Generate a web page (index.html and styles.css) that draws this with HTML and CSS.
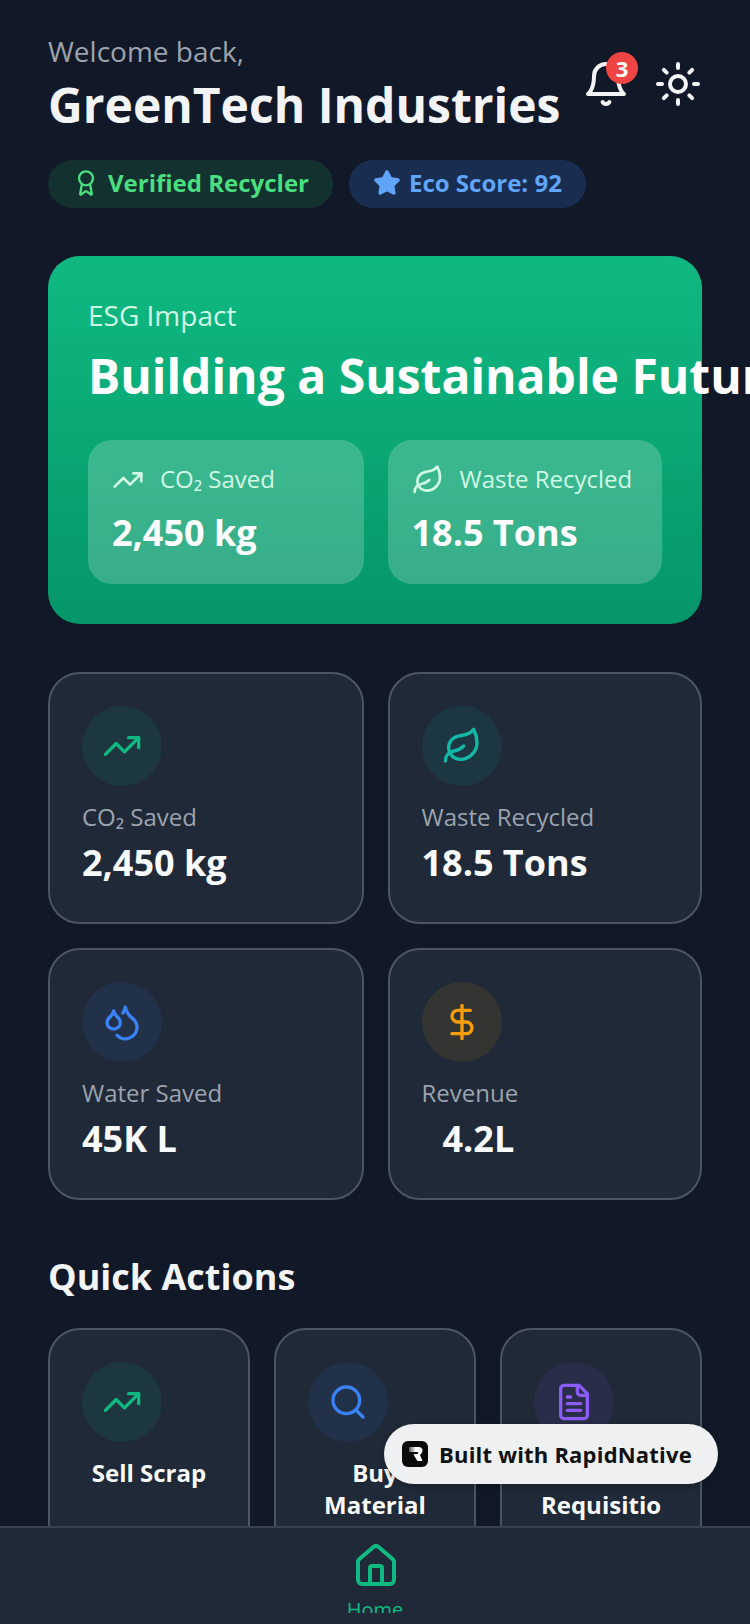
FILE: index.html
```html
<!DOCTYPE html>
<html lang="en">
<head>
    <meta charset="UTF-8">
    <meta name="viewport" content="width=device-width, initial-scale=1.0">
    <title>GreenTech Industries</title>
    <link rel="stylesheet" href="styles.css">
</head>
<body>
    <svg class="icon-defs" xmlns="http://www.w3.org/2000/svg">
        <symbol id="i-trend" viewBox="0 0 24 24"><polyline points="22 7 13.5 15.5 8.5 10.5 2 17"/><polyline points="16 7 22 7 22 13"/></symbol>
        <symbol id="i-leaf" viewBox="0 0 24 24"><path d="M11 20A7 7 0 0 1 9.8 6.1C15.5 5 17 4.48 19 2c1 2 2 4.18 2 8 0 5.5-4.78 10-10 10Z"/><path d="M2 21c0-3 1.85-5.36 5.08-6C9.5 14.52 12 13 13 12"/></symbol>
        <symbol id="i-drops" viewBox="0 0 24 24"><path d="M7 16.3c2.2 0 4-1.83 4-4.05 0-1.16-.57-2.26-1.71-3.19S7.29 6.75 7 5.3c-.29 1.45-1.14 2.84-2.29 3.76S3 11.1 3 12.25c0 2.22 1.8 4.05 4 4.05z"/><path d="M12.56 6.6A10.97 10.97 0 0 0 14 3.02c.5 2.5 2 4.9 4 6.5s3 3.5 3 5.5a6.98 6.98 0 0 1-11.91 4.97"/></symbol>
        <symbol id="i-dollar" viewBox="0 0 24 24"><path d="M12 2v20"/><path d="M17 5H9.5a3.5 3.5 0 0 0 0 7h5a3.5 3.5 0 0 1 0 7H6"/></symbol>
        <symbol id="i-search" viewBox="0 0 24 24"><circle cx="11" cy="11" r="8"/><path d="m21 21-4.3-4.3"/></symbol>
        <symbol id="i-file" viewBox="0 0 24 24"><path d="M15 2H6a2 2 0 0 0-2 2v16a2 2 0 0 0 2 2h12a2 2 0 0 0 2-2V7Z"/><path d="M14 2v4a2 2 0 0 0 2 2h4"/><path d="M10 9H8"/><path d="M16 13H8"/><path d="M16 17H8"/></symbol>
    </svg>

    <main class="content">
        <header class="header">
            <div>
                <div class="welcome">Welcome back,</div>
                <h1 class="company">GreenTech Industries</h1>
            </div>
            <div class="header-icons">
                <div class="bell">
                    <svg class="icon icon-48" viewBox="0 0 24 24"><path d="M6 8a6 6 0 0 1 12 0c0 7 3 9 3 9H3s3-2 3-9"/><path d="M10.3 21a1.94 1.94 0 0 0 3.4 0"/></svg>
                    <span class="bell-count">3</span>
                </div>
                <svg class="icon icon-48" viewBox="0 0 24 24"><circle cx="12" cy="12" r="4"/><path d="M12 2v2"/><path d="M12 20v2"/><path d="m4.93 4.93 1.41 1.41"/><path d="m17.66 17.66 1.41 1.41"/><path d="M2 12h2"/><path d="M20 12h2"/><path d="m6.34 17.66-1.41 1.41"/><path d="m19.07 4.93-1.41 1.41"/></svg>
            </div>
        </header>

        <div class="badges">
            <div class="badge badge-green">
                <svg class="icon icon-28" viewBox="0 0 24 24"><path d="m15.477 12.89 1.515 8.526a.5.5 0 0 1-.81.47l-3.58-2.687a1 1 0 0 0-1.197 0l-3.586 2.686a.5.5 0 0 1-.81-.469l1.514-8.526"/><circle cx="12" cy="8" r="6"/></svg>
                <span class="lifted">Verified Recycler</span>
            </div>
            <div class="badge badge-blue">
                <svg class="icon icon-28 icon-filled" viewBox="0 0 24 24"><path d="M11.525 2.295a.53.53 0 0 1 .95 0l2.31 4.679a2.123 2.123 0 0 0 1.595 1.16l5.166.756a.53.53 0 0 1 .294.904l-3.736 3.638a2.123 2.123 0 0 0-.611 1.878l.882 5.14a.53.53 0 0 1-.771.56l-4.618-2.428a2.122 2.122 0 0 0-1.973 0L6.396 21.01a.53.53 0 0 1-.77-.56l.881-5.139a2.122 2.122 0 0 0-.611-1.879L2.16 9.795a.53.53 0 0 1 .294-.906l5.165-.755a2.122 2.122 0 0 0 1.597-1.16z"/></svg>
                <span class="lifted">Eco Score: 92</span>
            </div>
        </div>

        <section class="hero">
            <div class="hero-label">ESG Impact</div>
            <h2 class="hero-title">Building a Sustainable Future</h2>
            <div class="hero-tiles">
                <div class="tile">
                    <div class="tile-head"><svg class="icon icon-32"><use href="#i-trend"/></svg><span class="lifted">CO₂ Saved</span></div>
                    <div class="tile-value">2,450 kg</div>
                </div>
                <div class="tile">
                    <div class="tile-head"><svg class="icon icon-32"><use href="#i-leaf"/></svg><span class="lifted">Waste Recycled</span></div>
                    <div class="tile-value">18.5 Tons</div>
                </div>
            </div>
        </section>

        <section class="stats">
            <div class="card stat">
                <div class="circle circle-green"><svg class="icon icon-40"><use href="#i-trend"/></svg></div>
                <div class="stat-label">CO₂ Saved</div>
                <div class="stat-value">2,450 kg</div>
            </div>
            <div class="card stat">
                <div class="circle circle-teal"><svg class="icon icon-40"><use href="#i-leaf"/></svg></div>
                <div class="stat-label">Waste Recycled</div>
                <div class="stat-value">18.5 Tons</div>
            </div>
            <div class="card stat">
                <div class="circle circle-blue"><svg class="icon icon-40"><use href="#i-drops"/></svg></div>
                <div class="stat-label">Water Saved</div>
                <div class="stat-value">45K L</div>
            </div>
            <div class="card stat">
                <div class="circle circle-amber"><svg class="icon icon-40"><use href="#i-dollar"/></svg></div>
                <div class="stat-label">Revenue</div>
                <div class="stat-value stat-value-indent">4.2L</div>
            </div>
        </section>

        <h2 class="section-title">Quick Actions</h2>
        <section class="actions">
            <div class="card action">
                <div class="circle circle-green"><svg class="icon icon-40"><use href="#i-trend"/></svg></div>
                <div class="action-label">Sell Scrap</div>
            </div>
            <div class="card action">
                <div class="circle circle-blue"><svg class="icon icon-40"><use href="#i-search"/></svg></div>
                <div class="action-label">Buy Material</div>
            </div>
            <div class="card action">
                <div class="circle circle-purple"><svg class="icon icon-40"><use href="#i-file"/></svg></div>
                <div class="action-label">New Requisition</div>
            </div>
        </section>
    </main>

    <nav class="tabbar">
        <div class="tab">
            <svg class="icon icon-48 tab-icon" viewBox="0 0 24 24"><path d="M15 21v-8a1 1 0 0 0-1-1h-4a1 1 0 0 0-1 1v8"/><path d="M3 10a2 2 0 0 1 .709-1.528l7-5.999a2 2 0 0 1 2.582 0l7 5.999A2 2 0 0 1 21 10v9a2 2 0 0 1-2 2H5a2 2 0 0 1-2-2z"/></svg>
            <span class="tab-label">Home</span>
        </div>
    </nav>

    <div class="built-with">
        <svg class="built-logo" viewBox="0 0 26 26">
            <defs>
                <linearGradient id="logo-fade" x1="0" y1="0" x2="1" y2="0">
                    <stop offset="0" stop-color="#555"/>
                    <stop offset="0.5" stop-color="#fff"/>
                </linearGradient>
            </defs>
            <rect width="26" height="26" rx="6" fill="#0a0a0a"/>
            <path d="M7 6h10a3.5 3.5 0 0 1 3 5.4L18 14l2.5 6h-5l-4.5-7h4.5l1-2H7z" fill="url(#logo-fade)"/>
            <path d="M7 11h5v9H7z" fill="#0a0a0a" opacity="0.55"/>
        </svg>
        Built with RapidNative
    </div>
</body>
</html>
```

FILE: styles.css
```css
* {
    box-sizing: border-box;
}
body {
    font-family: "Open Sans", sans-serif;
    margin: 0;
    width: 750px;
    height: 1624px;
    overflow: hidden;
    display: flex;
    flex-direction: column;
    position: relative;
    background-color: #111827;
    color: #f9fafb;
}
h1, h2 {
    margin: 0;
}
.icon-defs {
    display: none;
}
.icon {
    fill: none;
    stroke: currentColor;
    stroke-width: 2;
    stroke-linecap: round;
    stroke-linejoin: round;
    flex-shrink: 0;
}
.icon-filled {
    fill: currentColor;
}
.icon-28 { width: 28px; height: 28px; }
.icon-32 { width: 32px; height: 32px; }
.icon-40 { width: 40px; height: 40px; }
.icon-48 { width: 48px; height: 48px; }
.lifted {
    padding-bottom: 2px;
}

.content {
    flex: 1;
    min-height: 0;
    overflow: hidden;
    padding: 31px 48px 0;
}
.header {
    display: flex;
    justify-content: space-between;
    align-items: center;
}
.welcome {
    font-size: 28px;
    line-height: 40px;
    color: #9ca3af;
}
.company {
    font-size: 48px;
    font-weight: 700;
    line-height: 65px;
    margin-top: 1px;
    white-space: nowrap;
    color: #f3f4f6;
}
.header-icons {
    display: flex;
    align-items: center;
    gap: 24px;
    color: #f3f4f6;
}
.bell {
    position: relative;
    display: flex;
}
.bell-count {
    position: absolute;
    top: -8px;
    right: -8px;
    width: 32px;
    height: 32px;
    border-radius: 50%;
    background-color: #ef4444;
    color: #fff;
    font-size: 22px;
    font-weight: 700;
    line-height: 32px;
    text-align: center;
}
.badges {
    display: flex;
    gap: 16px;
    margin-top: 23px;
}
.badge {
    display: flex;
    align-items: center;
    gap: 8px;
    height: 48px;
    padding: 0 24px 2px;
    border-radius: 24px;
    font-size: 24px;
    font-weight: 700;
}
.badge-green {
    background-color: rgba(34, 197, 94, 0.15);
    color: #4ade80;
}
.badge-blue {
    background-color: rgba(59, 130, 246, 0.2);
    color: #60a5fa;
}

.hero {
    margin-top: 48px;
    padding: 39px 40px 40px;
    border-radius: 32px;
    background: linear-gradient(180deg, #10b981, #059669);
    color: #fff;
}
.hero-label {
    font-size: 28px;
    line-height: 40px;
    color: #d1fae5;
}
.hero-title {
    font-size: 48px;
    font-weight: 700;
    line-height: 65px;
    margin-top: 8px;
    white-space: nowrap;
}
.hero-tiles {
    display: grid;
    grid-template-columns: 275.5px 1fr;
    gap: 24px;
    margin-top: 32px;
}
.tile {
    height: 144px;
    padding: 24px;
    border-radius: 24px;
    background-color: rgba(255, 255, 255, 0.2);
}
.tile-head {
    display: flex;
    align-items: center;
    gap: 16px;
    font-size: 24px;
    line-height: 30px;
    color: #d1fae5;
    white-space: nowrap;
}
.tile-value {
    font-size: 36px;
    font-weight: 700;
    line-height: 49px;
    margin-top: 12px;
}

.stats {
    display: grid;
    grid-template-columns: 315.5px 1fr;
    gap: 24px;
    margin-top: 48px;
}
.card {
    border: 2px solid #4b5563;
    border-radius: 32px;
    background-color: #1f2937;
    padding: 32px;
}
.stat {
    padding-bottom: 35px;
}
.circle {
    width: 80px;
    height: 80px;
    border-radius: 50%;
    display: flex;
    align-items: center;
    justify-content: center;
}
.circle-green { background-color: rgba(16, 185, 129, 0.1); color: #10b981; }
.circle-teal { background-color: rgba(20, 184, 166, 0.1); color: #14b8a6; }
.circle-blue { background-color: rgba(59, 130, 246, 0.1); color: #3b82f6; }
.circle-amber { background-color: rgba(245, 158, 11, 0.1); color: #f59e0b; }
.circle-purple { background-color: rgba(139, 92, 246, 0.1); color: #8b5cf6; }
.stat-label {
    margin-top: 15px;
    font-size: 24px;
    line-height: 32px;
    color: #9ca3af;
}
.stat-value {
    margin-top: 5px;
    font-size: 36px;
    font-weight: 700;
    line-height: 49px;
}
.stat-value-indent {
    padding-left: 21px;
}

.section-title {
    margin-top: 52px;
    font-size: 36px;
    font-weight: 700;
    line-height: 49px;
    color: #f3f4f6;
}
.actions {
    display: grid;
    grid-template-columns: repeat(3, 1fr);
    gap: 24px;
    margin-top: 27px;
}
.action {
    height: 260px;
}
.action-label {
    margin-top: 15px;
    font-size: 24px;
    font-weight: 700;
    line-height: 32px;
    text-align: center;
    overflow-wrap: anywhere;
}

.tabbar {
    height: 98px;
    flex-shrink: 0;
    border-top: 2px solid #374151;
    background-color: #1f2937;
    padding-top: 14px;
    display: flex;
    justify-content: center;
}
.tab {
    height: 71px;
    overflow: hidden;
    display: flex;
    flex-direction: column;
    align-items: center;
    color: #10b981;
}
.tab-icon {
    margin-left: 2px;
}
.tab-label {
    margin-top: 6px;
    font-size: 20px;
}

.built-with {
    position: absolute;
    top: 1424px;
    right: 32px;
    width: 334px;
    height: 60px;
    padding-left: 18px;
    display: flex;
    align-items: center;
    gap: 11px;
    border-radius: 30px;
    background-color: #eef0f2;
    box-shadow: 0 2px 6px rgba(0, 0, 0, 0.25);
    color: #111;
    font-size: 22px;
    font-weight: 700;
    letter-spacing: 0.2px;
}
.built-logo {
    width: 26px;
    height: 26px;
}
```
